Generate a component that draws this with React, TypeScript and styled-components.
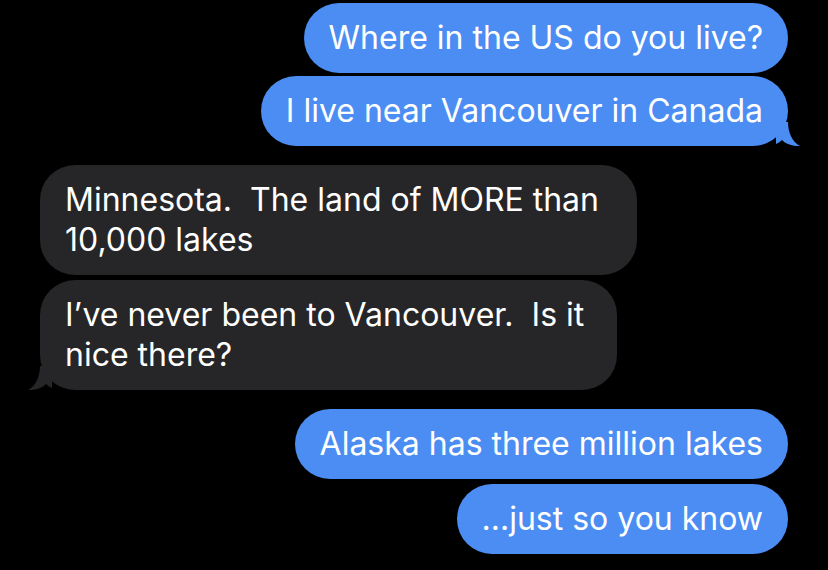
import React from "react";
import styled, { createGlobalStyle } from "styled-components";

const Global = createGlobalStyle`
  html, body { margin: 0; padding: 0; background: #000; }
  body { width: 828px; height: 570px; overflow: hidden; }
`;

const Thread = styled.div`
  display: flex;
  flex-direction: column;
  padding: 3px 40px 0 40px;
  background: #000;
  height: 570px;
  box-sizing: border-box;
  font-family: Inter, "Noto Sans", sans-serif;
`;

const Row = styled.div<{ $out: boolean; $gap: number }>`
  display: flex;
  justify-content: ${(p) => (p.$out ? "flex-end" : "flex-start")};
  margin-top: ${(p) => p.$gap}px;
`;

const Bubble = styled.div<{ $out: boolean; $width?: number }>`
  position: relative;
  box-sizing: border-box;
  background: ${(p) => (p.$out ? "#4b8df2" : "#262628")};
  color: #fff;
  font-size: 32px;
  line-height: 40px;
  letter-spacing: 0;
  padding: 15px 25px;
  border-radius: 35px;
  white-space: pre-wrap;
  width: ${(p) => (p.$width ? `${p.$width}px` : "auto")};
`;

const Tail = styled.svg<{ $out: boolean }>`
  position: absolute;
  bottom: 0;
  width: 24px;
  height: 24px;
  ${(p) => (p.$out ? "right: -12px;" : "left: -12px;")}
`;

type Msg = { text: string; out: boolean; gap: number; width?: number; tail?: boolean };

const msgs: Msg[] = [
  { text: "Where in the US do you live?", out: true, gap: 0 },
  { text: "I live near Vancouver in Canada", out: true, gap: 3, tail: true },
  { text: "Minnesota.  The land of MORE than 10,000 lakes", out: false, gap: 19, width: 597 },
  { text: "I\u2019ve never been to Vancouver.  Is it nice there?", out: false, gap: 5, width: 577, tail: true },
  { text: "Alaska has three million lakes", out: true, gap: 19 },
  { text: "...just so you know", out: true, gap: 5 },
];

export default function App() {
  return (
    <>
      <Global />
      <Thread>
        {msgs.map((m, i) => (
          <Row key={i} $out={m.out} $gap={m.gap}>
            <Bubble $out={m.out} $width={m.width}>
              {m.text}
              {m.tail && (
                <Tail $out={m.out} viewBox="0 0 24 24">
                  {m.out ? (
                    <path d="M0 0 L12 0 C12 10 16 20 24 24 C16 24 10 22 6 18 C4 20 2 21 0 22 Z" fill="#4b8df2" />
                  ) : (
                    <path d="M24 0 L12 0 C12 10 8 20 0 24 C8 24 14 22 18 18 C20 20 22 21 24 22 Z" fill="#262628" />
                  )}
                </Tail>
              )}
            </Bubble>
          </Row>
        ))}
      </Thread>
    </>
  );
}
